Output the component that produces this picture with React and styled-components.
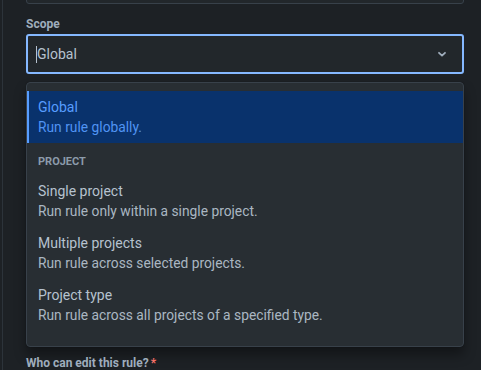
import { useState } from "react";
import styled, { createGlobalStyle } from "styled-components";

const GlobalStyle = createGlobalStyle`
  body {
    margin: 0;
    background: #1d2125;
    font-family: Roboto, "Noto Sans", "Liberation Sans", sans-serif;
    -webkit-font-smoothing: antialiased;
  }
`;

const options = [
  { value: "single", label: "Single project", description: "Run rule only within a single project." },
  { value: "multiple", label: "Multiple projects", description: "Run rule across selected projects." },
  { value: "type", label: "Project type", description: "Run rule across all projects of a specified type." }
];

const App = () => {
  const [selected, setSelected] = useState("global");

  return (
    <>
      <GlobalStyle />
      <Panel>
        <PrevField />
        <Label>Scope</Label>
        <Select>
          <Caret />
          <Value>Global</Value>
          <svg width="16" height="16" viewBox="0 0 16 16">
            <path
              d="M5 6.8l3 2.8 3-2.8"
              fill="none"
              stroke="#9fadbc"
              strokeWidth="1.8"
              strokeLinecap="round"
              strokeLinejoin="round"
            />
          </svg>
        </Select>
        <Menu>
          <Option $active={selected === "global"} onClick={() => setSelected("global")}>
            <OptionTitle>Global</OptionTitle>
            <OptionDesc>Run rule globally.</OptionDesc>
          </Option>
          <GroupHeading>Project</GroupHeading>
          {options.map((o) => (
            <Option key={o.value} $active={selected === o.value} onClick={() => setSelected(o.value)}>
              <OptionTitle>{o.label}</OptionTitle>
              <OptionDesc>{o.description}</OptionDesc>
            </Option>
          ))}
        </Menu>
        <Label $gap={8}>
          Who can edit this rule?<Required>*</Required>
        </Label>
      </Panel>
    </>
  );
};

const Panel = styled.div`
  margin-left: 2px;
  border-left: 1px solid #2c333a;
  padding: 0 17px 0 23px;
  height: 370px;
  overflow: hidden;
  box-sizing: border-box;
`;

const PrevField = styled.div`
  height: 40px;
  margin-top: -36px;
  border: 1px solid #38414a;
  border-radius: 3px;
  background: #22272b;
  box-sizing: border-box;
`;

const Label = styled.div`
  margin-top: ${(p) => p.$gap || 12}px;
  font-size: 12px;
  font-weight: 700;
  line-height: 16px;
  color: #9fadbc;
`;

const Required = styled.span`
  color: #f87168;
  margin-left: 2px;
`;

const Select = styled.div`
  margin-top: 2px;
  height: 40px;
  box-sizing: border-box;
  border: 2px solid #85b8ff;
  border-radius: 3px;
  background: #22272b;
  display: flex;
  align-items: center;
  padding: 0 12px 0 8px;

  svg {
    margin-left: auto;
  }
`;

const Caret = styled.span`
  width: 1px;
  height: 17px;
  background: #b6c2cf;
`;

const Value = styled.span`
  font-size: 14px;
  color: #b6c2cf;
`;

const Menu = styled.div`
  margin-top: 8px;
  background: #282e33;
  border: 1px solid #38414a;
  border-radius: 4px;
  padding: 8px 0 15px;
  box-shadow: 0 8px 12px rgba(3, 4, 4, 0.36), 0 0 1px rgba(3, 4, 4, 0.5);
`;

const Option = styled.div`
  padding: 6px 12px 6px 9px;
  border-left: 2px solid ${(p) => (p.$active ? "#579dff" : "transparent")};
  background: ${(p) => (p.$active ? "#09326c" : "transparent")};
  color: ${(p) => (p.$active ? "#579dff" : "#b6c2cf")};
  cursor: pointer;
`;

const OptionTitle = styled.div`
  font-size: 14px;
  line-height: 20px;
`;

const OptionDesc = styled.div`
  font-size: 13.8px;
  line-height: 20px;
  opacity: 0.92;
`;

const GroupHeading = styled.div`
  padding: 11px 11px 5px;
  font-size: 11px;
  font-weight: 700;
  line-height: 16px;
  text-transform: uppercase;
  color: #8c9bab;
`;

export default App;
